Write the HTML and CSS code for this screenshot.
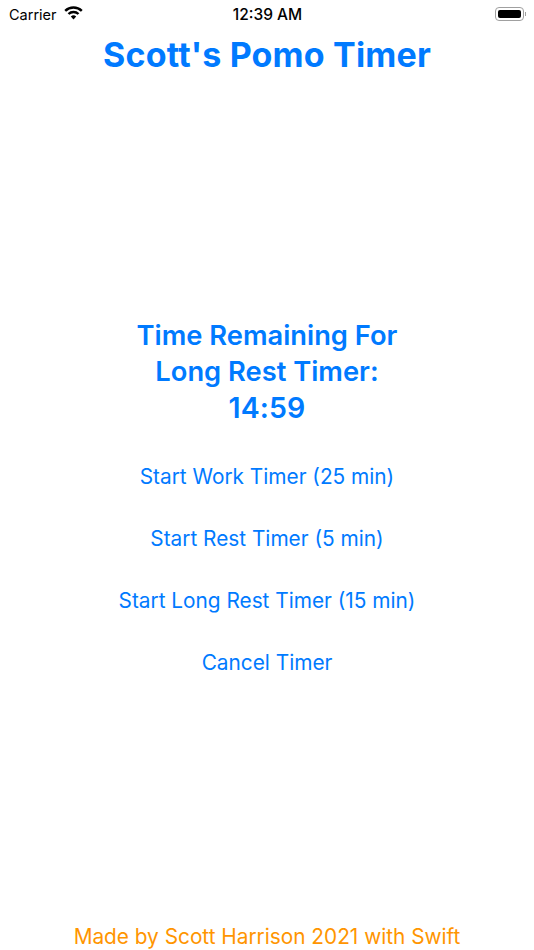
FILE: index.html
```html
<!DOCTYPE html>
<html lang="en">

<head>
    <meta charset="UTF-8">
    <meta name="viewport" content="width=device-width, initial-scale=1.0">
    <title>Scott's Pomo Timer</title>
    <link rel="stylesheet" href="styles.css">
</head>

<body>
    <div class="screen">
        <div class="status-bar">
            <div class="status-left">
                <span class="carrier">Carrier</span>
                <svg class="wifi" width="19" height="14" viewBox="0 0 19 14">
                    <path class="wifi-arc" d="M1.200 4.900A11.800 11.800 0 0 1 17.800 4.900" />
                    <path class="wifi-arc" d="M4.500 8A7.100 7.100 0 0 1 14.500 8" />
                    <path d="M6.800 10.500a3.900 3.900 0 0 1 5.400 0L9.500 13.600z" />
                </svg>
            </div>
            <span class="clock">12:39 AM</span>
            <div class="status-right">
                <div class="battery">
                    <div class="battery-level"></div>
                </div>
                <div class="battery-cap"></div>
            </div>
        </div>

        <h1 class="title">Scott's Pomo Timer</h1>

        <div class="timer">
            <p class="remaining">Time Remaining For<br>Long Rest Timer:<br><span class="time-left">14:59</span></p>
            <div class="actions">
                <button type="button" class="action">Start Work Timer (25 min)</button>
                <button type="button" class="action">Start Rest Timer (5 min)</button>
                <button type="button" class="action">Start Long Rest Timer (15 min)</button>
                <button type="button" class="action">Cancel Timer</button>
            </div>
        </div>

        <p class="credit">Made by Scott Harrison 2021 with Swift</p>
    </div>
</body>

</html>
```

FILE: styles.css
```css
html {
    box-sizing: border-box;
}

body {
    margin: 0;
    background-color: #fff;
    font-family: Inter, "Liberation Sans", sans-serif;
}

.screen {
    display: flex;
    flex-direction: column;
    align-items: center;
    height: 950px;
    overflow: hidden;
}

.status-bar {
    display: flex;
    align-items: center;
    justify-content: space-between;
    align-self: stretch;
    height: 28px;
    padding: 0 8px 0 9px;
    color: #000;
}

.status-left {
    display: flex;
    align-items: center;
    gap: 7px;
    width: 150px;
}

.carrier {
    font-size: 14.500px;
}

.wifi {
    margin-top: -2px;
}

.wifi-arc {
    fill: none;
    stroke: #000;
    stroke-width: 2.400px;
}

.clock {
    font-size: 15.500px;
    font-weight: 500;
}

.status-right {
    display: flex;
    align-items: center;
    justify-content: flex-end;
    gap: 1px;
    width: 150px;
    margin-top: -1px;
}

.battery {
    width: 29px;
    height: 14px;
    padding: 2px;
    box-sizing: border-box;
    border: 1px solid #a0a0a0;
    border-radius: 4px;
}

.battery-level {
    height: 100%;
    background-color: #000;
    border-radius: 2px;
}

.battery-cap {
    width: 1px;
    height: 4px;
    background-color: #a0a0a0;
}

.title {
    margin: 6px 0 0;
    font-size: 34px;
    line-height: 41px;
    font-weight: 700;
    letter-spacing: 0.170px;
    color: #007aff;
}

.timer {
    display: flex;
    flex-direction: column;
    align-items: center;
    margin-top: 243px;
}

.remaining {
    margin: 0;
    font-size: 27.300px;
    line-height: 36px;
    font-weight: 600;
    text-align: center;
    color: #007aff;
}

.time-left {
    font-size: 28.500px;
    letter-spacing: 0.100px;
}

.actions {
    display: flex;
    flex-direction: column;
    align-items: center;
    gap: 33px;
    margin-top: 35px;
}

.action {
    padding: 0;
    border: none;
    background-color: transparent;
    font-family: inherit;
    font-size: 20.800px;
    line-height: 29px;
    color: #007aff;
}

.credit {
    margin: auto 0 0;
    font-size: 20.800px;
    line-height: 27px;
    color: #ff9500;
}
```
